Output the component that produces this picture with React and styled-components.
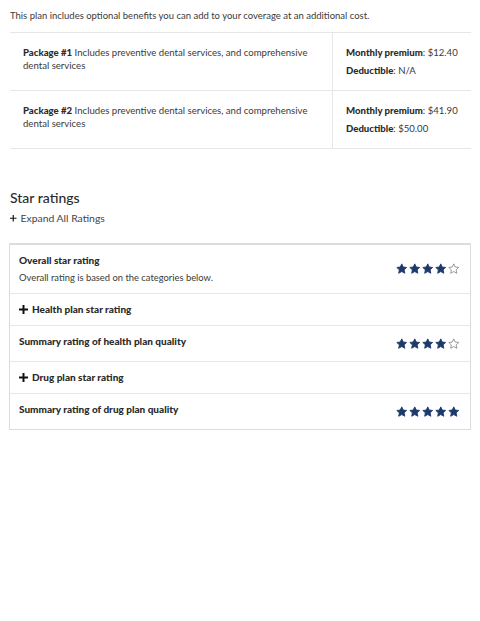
import React from "react";
import styled, { createGlobalStyle } from "styled-components";

const Global = createGlobalStyle`
  html, body { margin: 0; padding: 0; background: #fff; }
  body { font-family: Lato, "Open Sans", Arial, sans-serif; color: #3a3a3a; }
`;

const Page = styled.div`
  padding: 9px 9px 0 10px;
  width: 480px;
  box-sizing: border-box;
`;

const Intro = styled.p`
  margin: 0 0 10px;
  font-size: 9.5px;
  line-height: 13px;
  color: #3a3a3a;
`;

const Table = styled.div`
  display: grid;
  grid-template-columns: 322px 1fr;
  border-top: 1px solid #e6e6e6;
`;

const Cell = styled.div`
  padding: ${(p) => (p.$right ? "13px 4px 13px 13px" : "13px")};
  border-bottom: 1px solid #e6e6e6;
  border-left: ${(p) => (p.$right ? "1px solid #e6e6e6" : "none")};
  font-size: 9.6px;
  line-height: 13px;
  min-height: 31px;
`;

const Bold = styled.b`
  font-weight: 900;
  color: #2b2b2b;
`;

const PriceLine = styled.div`
  margin-bottom: 5px;
`;

const Heading = styled.h2`
  margin: 40px 0 0;
  font-size: 14px;
  line-height: 17px;
  font-weight: 500;
  color: #2a2a2a;
`;

const ExpandAll = styled.div`
  display: flex;
  align-items: center;
  gap: 4px;
  margin-top: 6px;
  font-size: 10.4px;
  line-height: 13px;
  color: #444;
`;

const Card = styled.div`
  margin: 18px 0 0 -1px;
  border: 1px solid #dcdcdc;
  border-top-width: 2px;
`;

const Row = styled.div`
  display: flex;
  align-items: center;
  justify-content: space-between;
  padding: 9px 10px 9px 9px;
  border-top: ${(p) => (p.$first ? "none" : "1px solid #e6e6e6")};
`;

const Left = styled.div`
  display: flex;
  flex-direction: column;
  gap: 4px;
`;

const Title = styled.div`
  display: flex;
  align-items: center;
  gap: 4px;
  font-size: 10px;
  line-height: 13px;
  font-weight: 900;
  color: #2b2b2b;
  padding-bottom: ${(p) => (p.$pad ? "4px" : "0")};
`;

const Sub = styled.div`
  font-size: 9.4px;
  line-height: 13px;
  color: #3a3a3a;
`;

const Stars = styled.div`
  display: flex;
  gap: 1.5px;
  margin-right: 1px;
`;

const STAR =
  "M12 1.8l3.1 6.6 7.2.9-5.3 5 1.4 7.1L12 17.9l-6.4 3.5L7 14.3 1.7 9.3l7.2-.9z";

const Star = ({ filled }) => (
  <svg width="11.5" height="11.5" viewBox="0 0 24 24">
    <path
      d={STAR}
      fill={filled ? "#1d3a6b" : "none"}
      stroke={filled ? "#1d3a6b" : "#555"}
      strokeWidth={filled ? 1.8 : 1.2}
      strokeLinejoin="round"
    />
  </svg>
);

const Rating = ({ value }) => (
  <Stars>
    {[0, 1, 2, 3, 4].map((i) => (
      <Star key={i} filled={i < value} />
    ))}
  </Stars>
);

const Plus = ({ size = 9, w = 2.2 }) => (
  <svg width={size} height={size} viewBox="0 0 10 10">
    <path d="M5 0v10M0 5h10" stroke="#111" strokeWidth={w} />
  </svg>
);

const packages = [
  { n: "#1", premium: "$12.40", deductible: "N/A" },
  { n: "#2", premium: "$41.90", deductible: "$50.00" },
];

export default function App() {
  return (
    <Page>
      <Global />
      <Intro>
        This plan includes optional benefits you can add to your coverage at an additional cost.
      </Intro>
      <Table>
        {packages.map((p) => (
          <React.Fragment key={p.n}>
            <Cell>
              <Bold>Package {p.n}</Bold> Includes preventive dental services, and comprehensive
              dental services
            </Cell>
            <Cell $right>
              <PriceLine>
                <Bold>Monthly premium</Bold>: {p.premium}
              </PriceLine>
              <div>
                <Bold>Deductible</Bold>: {p.deductible}
              </div>
            </Cell>
          </React.Fragment>
        ))}
      </Table>

      <Heading>Star ratings</Heading>
      <ExpandAll>
        <Plus size={6.5} w={1.8} />
        Expand All Ratings
      </ExpandAll>

      <Card>
        <Row $first>
          <Left>
            <Title>Overall star rating</Title>
            <Sub>Overall rating is based on the categories below.</Sub>
          </Left>
          <Rating value={4} />
        </Row>
        <Row>
          <Title>
            <Plus />
            Health plan star rating
          </Title>
        </Row>
        <Row>
          <Title $pad>Summary rating of health plan quality</Title>
          <Rating value={4} />
        </Row>
        <Row>
          <Title>
            <Plus />
            Drug plan star rating
          </Title>
        </Row>
        <Row>
          <Title $pad>Summary rating of drug plan quality</Title>
          <Rating value={5} />
        </Row>
      </Card>
    </Page>
  );
}
